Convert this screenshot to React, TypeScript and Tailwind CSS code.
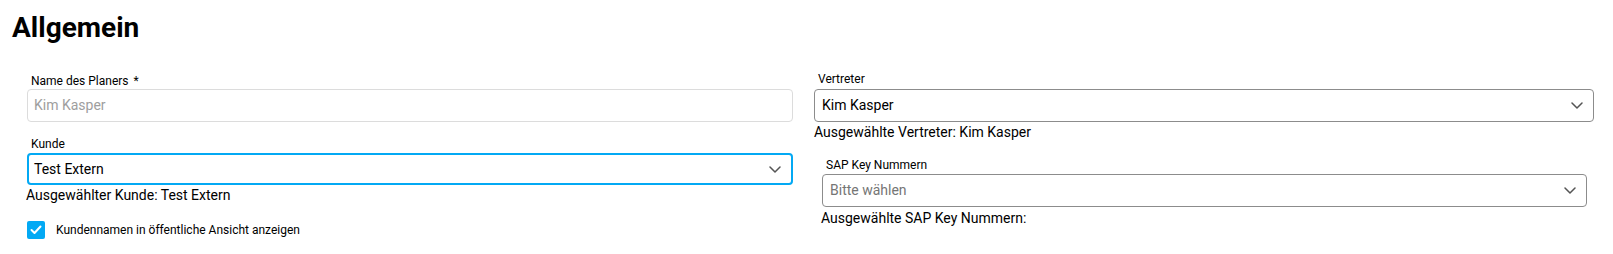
import React from "react";

const Chevron = () => (
  <svg width="12" height="7" viewBox="0 0 12 7" fill="none" className="shrink-0">
    <path d="M1 1l5 5 5-5" stroke="#555" strokeWidth="1.5" strokeLinecap="round" strokeLinejoin="round" />
  </svg>
);

export default function App() {
  return (
    <div className="bg-white w-[1613px] h-[254px] font-['Roboto',sans-serif] text-black">
      <h1 className="pl-[12px] pt-[11px] text-[28px] leading-[33px] font-bold">Allgemein</h1>
      <div className="flex mt-[30px] pl-[27px]">
        <div className="w-[766px] flex flex-col">
          <label className="text-[12px] leading-[14px] pl-[4px]">Name des Planers <span className="ml-[2px]">*</span></label>
          <div className="mt-[1px] h-[33px] border border-[#dcdcdc] rounded-[4px] flex items-center px-[6px] text-[14px] text-[#9e9e9e]">
            Kim Kasper
          </div>
          <label className="mt-[15px] text-[12px] leading-[14px] pl-[4px]">Kunde</label>
          <div className="mt-[2px] h-[32px] border-2 border-[#03a9f4] rounded-[4px] flex items-center justify-between pl-[5px] pr-[10px] text-[14px]">
            <span>Test Extern</span>
            <Chevron />
          </div>
          <div className="mt-[1px] text-[14px] leading-[18px] -ml-[1px]">Ausgewählter Kunde: Test Extern</div>
          <div className="mt-[17px] flex items-center">
            <div className="w-[18px] h-[18px] rounded-[2px] bg-[#03a9f4] flex items-center justify-center">
              <svg width="12" height="10" viewBox="0 0 12 10" fill="none">
                <path d="M1.5 5l3 3 6-6.5" stroke="white" strokeWidth="2" strokeLinecap="round" strokeLinejoin="round" />
              </svg>
            </div>
            <span className="ml-[11px] text-[12px] leading-[14px]">Kundennamen in öffentliche Ansicht anzeigen</span>
          </div>
        </div>
        <div className="ml-[21px] w-[780px] flex flex-col -mt-[2px]">
          <label className="text-[12px] leading-[14px] pl-[4px]">Vertreter</label>
          <div className="mt-[3px] h-[33px] border border-[#8c8c8c] rounded-[4px] flex items-center justify-between pl-[7px] pr-[10px] text-[14px]">
            <span>Kim Kasper</span>
            <Chevron />
          </div>
          <div className="mt-[1px] text-[14px] leading-[18px]">Ausgewählte Vertreter: Kim Kasper</div>
          <div className="ml-[8px] mr-[7px] mt-[17px] flex flex-col">
            <label className="text-[12px] leading-[14px] pl-[4px]">SAP Key Nummern</label>
            <div className="mt-[2px] h-[33px] border border-[#8c8c8c] rounded-[4px] flex items-center justify-between pl-[7px] pr-[10px] text-[14px] text-[#757575]">
              <span>Bitte wählen</span>
              <Chevron />
            </div>
            <div className="mt-[2px] text-[14px] leading-[18px] -ml-[1px]">Ausgewählte SAP Key Nummern:</div>
          </div>
        </div>
      </div>
    </div>
  );
}
